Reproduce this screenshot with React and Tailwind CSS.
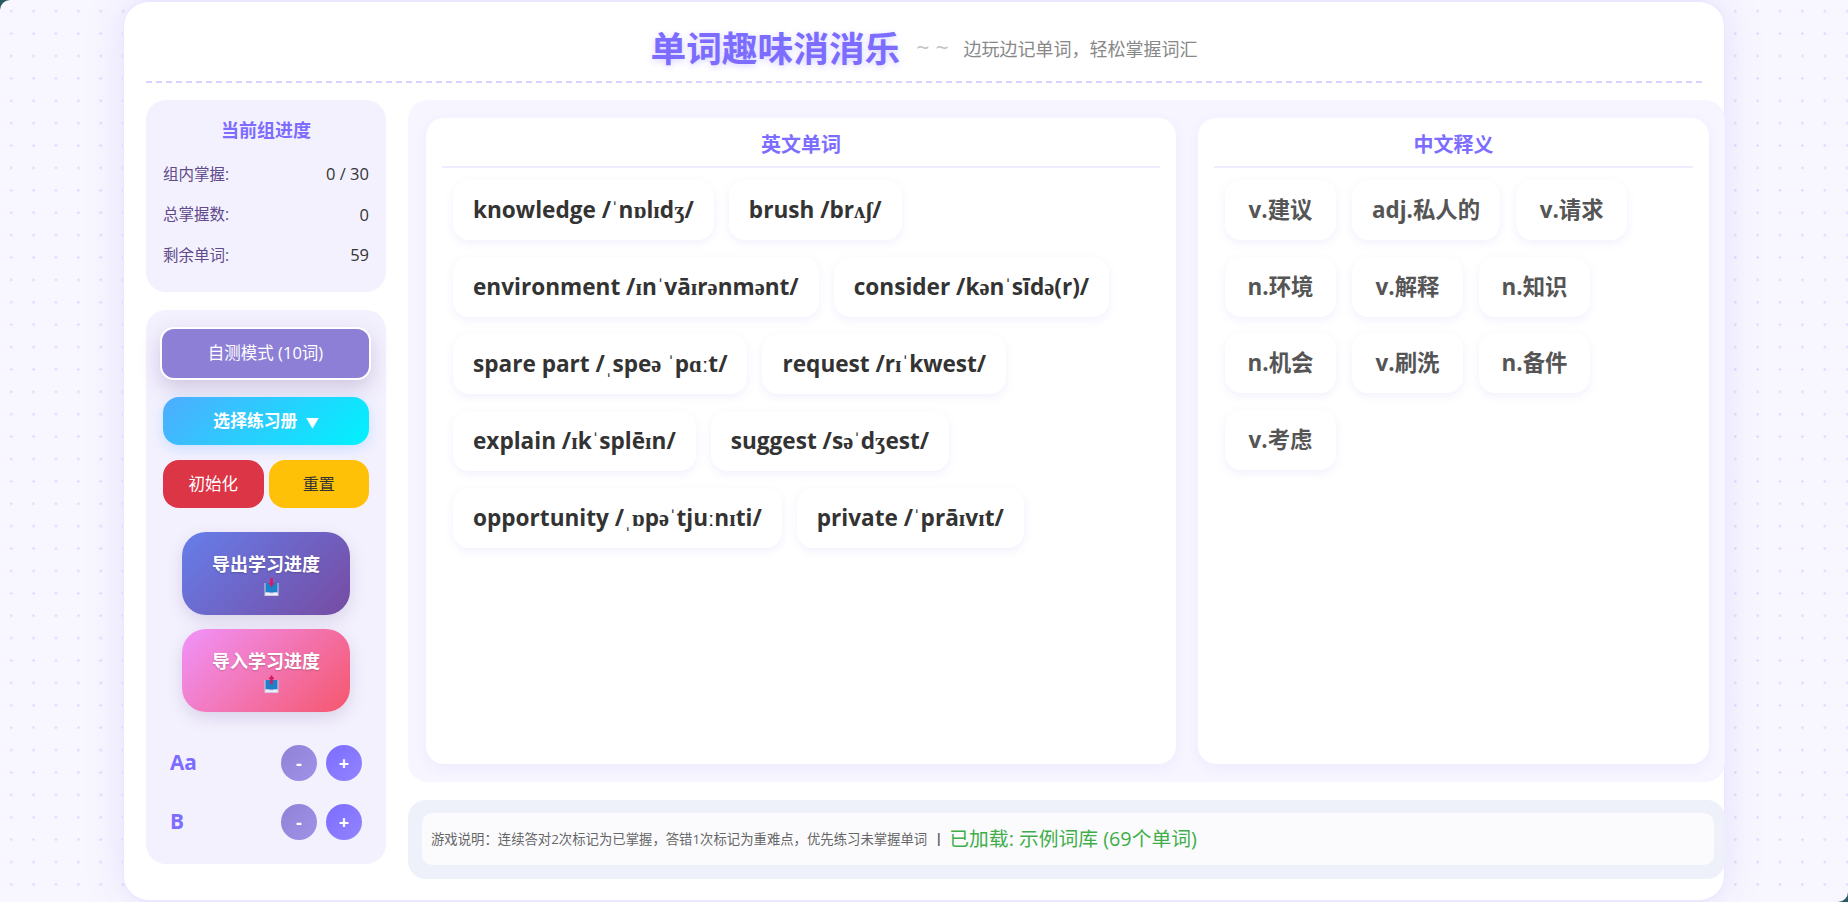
const EN_WORDS = [
  ['knowledge /ˈnɒlɪdʒ/', 'brush /brʌʃ/'],
  ['environment /ɪnˈvāɪrənmənt/', 'consider /kənˈsīdə(r)/'],
  ['spare part /ˌspeə ˈpɑːt/', 'request /rɪˈkwest/'],
  ['explain /ɪkˈsplēɪn/', 'suggest /səˈdʒest/'],
  ['opportunity /ˌɒpəˈtjuːnɪti/', 'private /ˈprāɪvɪt/'],
]

const ZH_WORDS = [
  ['v.建议', 'adj.私人的', 'v.请求'],
  ['n.环境', 'v.解释', 'n.知识'],
  ['n.机会', 'v.刷洗', 'n.备件'],
  ['v.考虑'],
]

const STATS = [
  ['组内掌握:', '0 / 30'],
  ['总掌握数:', '0'],
  ['剩余单词:', '59'],
]

function TrayIcon({ up }) {
  return (
    <svg width="15" height="18" viewBox="0 0 15 18" className="block ml-[10px]">
      <path d="M0.500 5h14v13H0.500z" fill="#cfcce0" />
      <path d="M1.500 5h12v9.500H1.500z" fill="#1f7fc8" />
      <path d="M1.500 14.500h3.500l1 1h3l1-1h3.500V17h-12z" fill="#f0eef7" />
      {up
        ? <path d="M7.500 0 10.500 4H8.800V9H6.200V4H4.500z" fill="#d81b60" />
        : <path d="M6.200 0h2.600v5h1.700l-3 4-3-4h1.700z" fill="#d81b60" />}
    </svg>
  )
}

function SizeRow({ label, className }) {
  return (
    <div className={`flex items-center justify-between h-[36px] pl-[7px] pr-[7px] ${className}`}>
      <span className="text-[20.8px] font-bold text-[#7c6cff]">{label}</span>
      <div className="flex gap-[9px]">
        <button className="w-[36px] h-[36px] rounded-full bg-gradient-to-br from-[#8f82d6] to-[#a092e8] text-white font-bold text-[18px]">-</button>
        <button className="w-[36px] h-[36px] rounded-full bg-gradient-to-br from-[#7c6cff] to-[#9384ff] text-white font-bold text-[18px]">+</button>
      </div>
    </div>
  )
}

// the phonetic signs came from a fallback serif in the original
function Phonetic({ text }) {
  return text.split(/([ɪəʌʃʒɒɑːˈˌ])/).map((part, i) =>
    i % 2 === 1
      ? <span key={i} className="font-['Liberation_Serif']">{part}</span>
      : part
  )
}

function WordCard({ children, className }) {
  return (
    <div className={`h-[60px] flex items-center justify-center rounded-[16px] bg-white font-bold px-[20px] shadow-[0_3px_10px_rgba(108,92,231,0.09)] whitespace-nowrap ${className}`}>
      <span>{children}</span>
    </div>
  )
}

export default function App() {
  return (
    <div className="bg-[#2a5a60]">
      <div className="h-[902px] overflow-hidden rounded-tl-[10px] rounded-br-[10px] bg-[#f8f7ff] bg-[radial-gradient(circle,#e0dbff_1px,transparent_1.5px)] bg-[length:22.4px_22.4px] font-['Open_Sans','Noto_Sans_CJK_SC',sans-serif]">
        <div className="ml-[123px] w-[1602px] h-[902px] bg-white rounded-[26px] border-x border-y-2 border-[#ebe7ff] shadow-[0_0_40px_rgba(108,92,231,0.15)] px-[22px] flex flex-col">
          <header className="h-[81px] shrink-0 pt-[15px] border-b-2 border-dashed border-[#d9d2ff] flex items-center justify-center">
            <h1 className="text-[35.7px] font-bold text-[#7c6cff] [text-shadow:0_2px_6px_rgba(124,108,255,0.3)]">单词趣味消消乐</h1>
            <span className="ml-[16px] -mt-[4px] text-[23px] text-[#c4c4c4]">~ ~</span>
            <span className="ml-[15px] text-[18px] text-[#888888]">边玩边记单词，轻松掌握词汇</span>
          </header>

          <div className="flex gap-[22px] mt-[17px]">
            <aside className="w-[240px] shrink-0 flex flex-col gap-[18px]">
              <section className="h-[192px] rounded-[20px] bg-[#f4f1fe] px-[17px] pt-[18px]">
                <h2 className="text-center text-[18px] font-bold text-[#7c6cff] leading-[24px]">当前组进度</h2>
                <div className="mt-[21px] flex flex-col gap-[17.5px]">
                  {STATS.map(([label, value]) => (
                    <div key={label} className="flex justify-between h-[23px] items-center">
                      <span className="text-[15.5px] text-[#5f4b8b]">{label}</span>
                      <span className="text-[16.5px] text-[#333333]">{value}</span>
                    </div>
                  ))}
                </div>
              </section>

              <section className="h-[554px] rounded-[20px] bg-[#f4f1fe] px-[17px] pt-[17px]">
                <button className="w-[211px] h-[53px] -ml-[3px] block rounded-[14px] bg-[#8e7fd6] border-2 border-white text-[16.5px] text-white shadow-[0_8px_20px_rgba(95,75,139,0.25)]">
                  自测模式 (10词)
                </button>
                <button className="w-full h-[48px] mt-[17px] rounded-[16px] bg-[linear-gradient(135deg,#4facfe_0%,#00f2fe_100%)] text-white font-bold text-[16.8px] shadow-[0_4px_14px_rgba(79,172,254,0.25)]">
                  选择练习册 <span className="ml-[4px] text-[13px]">▼</span>
                </button>
                <div className="flex gap-[5px] mt-[15px]">
                  <button className="flex-1 h-[48px] rounded-[16px] bg-[#dc3545] text-white text-[16.5px]">初始化</button>
                  <button className="flex-1 h-[48px] rounded-[16px] bg-[#ffc107] text-[#333333] text-[16px]">重置</button>
                </div>
                <div className="flex flex-col items-center gap-[14px] mt-[24px]">
                  <button className="w-[168px] h-[83px] rounded-[24px] bg-[linear-gradient(135deg,#667eea_0%,#764ba2_100%)] text-white font-bold text-[18px] leading-[24px] [text-shadow:0_1px_2px_rgba(0,0,0,0.2)] flex flex-col items-center justify-center gap-[2px] shadow-[0_6px_16px_rgba(95,75,139,0.18)]">
                    导出学习进度
                    <TrayIcon />
                  </button>
                  <button className="w-[168px] h-[83px] rounded-[24px] bg-[linear-gradient(135deg,#f093fb_0%,#f5576c_100%)] text-white font-bold text-[18px] leading-[24px] [text-shadow:0_1px_2px_rgba(0,0,0,0.2)] flex flex-col items-center justify-center gap-[2px] shadow-[0_6px_16px_rgba(95,75,139,0.18)]">
                    导入学习进度
                    <TrayIcon up />
                  </button>
                </div>
                <SizeRow label="Aa" className="mt-[33px]" />
                <SizeRow label="B" className="mt-[23px]" />
              </section>
            </aside>

            <main className="w-[1317px] shrink-0 flex flex-col">
              <div className="h-[682px] rounded-[20px] bg-[#f7f5ff] px-[18px] pt-[18px] flex gap-[22px]">
                <section className="w-[750px] h-[646px] shrink-0 rounded-[18px] bg-white px-[16px] shadow-[0_4px_14px_rgba(108,92,231,0.06)]">
                  <h3 className="h-[50px] pt-[13px] text-center text-[20px] font-bold leading-[28px] text-[#7c6cff] border-b-2 border-[#efecff]">英文单词</h3>
                  <div className="pt-[12px] px-[11px] flex flex-col gap-[17px]">
                    {EN_WORDS.map((row) => (
                      <div key={row[0]} className="flex gap-[15px]">
                        {row.map((w) => (
                          <WordCard key={w} className="text-[22.6px] text-[#333333]"><Phonetic text={w} /></WordCard>
                        ))}
                      </div>
                    ))}
                  </div>
                </section>
                <section className="w-[511px] h-[646px] shrink-0 rounded-[18px] bg-white px-[16px] shadow-[0_4px_14px_rgba(108,92,231,0.06)]">
                  <h3 className="h-[50px] pt-[13px] text-center text-[20px] font-bold leading-[28px] text-[#7c6cff] border-b-2 border-[#efecff]">中文释义</h3>
                  <div className="pt-[12px] px-[11px] flex flex-col gap-[16.5px]">
                    {ZH_WORDS.map((row) => (
                      <div key={row[0]} className="flex gap-[16px]">
                        {row.map((w) => (
                          <WordCard key={w} className="min-w-[111px] text-[22.4px] text-[#555555]">{w}</WordCard>
                        ))}
                      </div>
                    ))}
                  </div>
                </section>
              </div>

              <footer className="mt-[18px] h-[79px] rounded-[18px] bg-[#eff1fa] pl-[14px] pr-[11px] py-[13px]">
                <div className="h-[52px] rounded-[10px] bg-[#fbfbfe] pl-[9px] flex items-center">
                  <span className="text-[13.37px] text-[#666666]">游戏说明：连续答对2次标记为已掌握，答错1次标记为重难点，优先练习未掌握单词</span>
                  <span className="ml-[8px] mr-[7px] text-[12.8px] font-bold text-[#555555]">|</span>
                  <span className="text-[19.8px] text-[#3fae49]">已加载: 示例词库 (69个单词)</span>
                </div>
              </footer>
            </main>
          </div>
        </div>
      </div>
    </div>
  )
}
